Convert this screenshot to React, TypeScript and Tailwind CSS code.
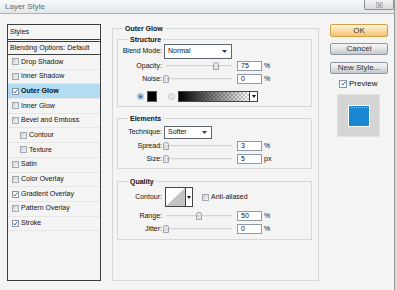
import React from 'react'

const LIST_ITEMS: { label: string; checked: boolean; sub?: boolean; active?: boolean }[] = [
  { label: 'Drop Shadow', checked: false },
  { label: 'Inner Shadow', checked: false },
  { label: 'Outer Glow', checked: true, active: true },
  { label: 'Inner Glow', checked: false },
  { label: 'Bevel and Emboss', checked: false },
  { label: 'Contour', checked: false, sub: true },
  { label: 'Texture', checked: false, sub: true },
  { label: 'Satin', checked: false },
  { label: 'Color Overlay', checked: false },
  { label: 'Gradient Overlay', checked: true },
  { label: 'Pattern Overlay', checked: false },
  { label: 'Stroke', checked: true },
]

function Check({ checked, size = 7 }: { checked: boolean; size?: number }) {
  const box = size === 8 ? 'w-[8px] h-[8px]' : 'w-[7px] h-[7px]'
  if (checked) {
    return (
      <span className={`${box} shrink-0 border border-[#8e979f] bg-white flex items-center justify-center`}>
        <svg width="5" height="5" viewBox="0 0 5 5">
          <path d="M0.6 2.6 L1.8 4 L4.4 0.6" fill="none" stroke="#1f4fa8" strokeWidth="0.9" />
        </svg>
      </span>
    )
  }
  return <span className={`${box} shrink-0 border border-[#a2a8ae] bg-gradient-to-br from-[#cdd0d3] to-[#f6f6f6]`} />
}

function Thumb() {
  return (
    <svg width="6" height="8" viewBox="0 0 6 8" className="shrink-0">
      <path d="M0.5 2 Q0.5 0.5 3 0.5 Q5.5 0.5 5.5 2 L5.5 7.5 L0.5 7.5 Z" fill="#ececec" stroke="#8b8f94" strokeWidth="0.8" />
      <path d="M2 3 L2 6 M4 3 L4 6" stroke="#b8bcc0" strokeWidth="0.6" />
    </svg>
  )
}

/** スライダー＋数値入力 */
function SliderRow({ label, value, unit, pos }: { label: string; value: string; unit: string; pos: number }) {
  return (
    <div className="flex items-center h-[12px]">
      <span className="w-[44px] text-right">{label}</span>
      <div className="ml-[4px] w-[66px] h-[8px] relative flex items-center">
        <div className="w-full h-[2px] bg-[#d2d4d6] border-b border-[#ededed]" />
        <div className="absolute top-0" style={{ left: `${pos * 66 - 3}px` }}>
          <Thumb />
        </div>
      </div>
      <div className="ml-[5px] w-[25px] h-[10px] border border-[#8f9aa5] bg-white pl-[3px] leading-[8px]">{value}</div>
      <span className="ml-[2px]">{unit}</span>
    </div>
  )
}

function DownArrow() {
  return (
    <svg width="5" height="3" viewBox="0 0 5 3">
      <path d="M0 0 L5 0 L2.5 3 Z" fill="#2d3e5c" />
    </svg>
  )
}

function Dropdown({ value, width }: { value: string; width: string }) {
  return (
    <div className={`${width} h-full border border-[#5e6670] bg-white flex items-center justify-between pl-[3px] pr-[4px]`}>
      <span>{value}</span>
      <DownArrow />
    </div>
  )
}

function Radio({ on }: { on: boolean }) {
  return (
    <svg width="7" height="7" viewBox="0 0 7 7" className="shrink-0">
      <circle cx="3.5" cy="3.5" r="3" fill={on ? '#dbe4ee' : '#e6e6e6'} stroke={on ? '#7f92aa' : '#b4b4b4'} strokeWidth="0.7" />
      {on && <circle cx="3.5" cy="3.5" r="1.7" fill="#2e6fc9" />}
    </svg>
  )
}

function Group({ title, className, children }: { title: string; className: string; children: React.ReactNode }) {
  return (
    <div className={`relative border border-[#d6d7d8] ${className}`}>
      <span className="absolute -top-[5px] left-[10px] px-[2px] bg-[#f4f4f4] font-bold leading-[9px]">{title}</span>
      {children}
    </div>
  )
}

export default function App() {
  return (
    <div className="w-[397px] h-[290px] bg-[#d9d9d9] overflow-hidden font-['Liberation_Sans',Arial,sans-serif] text-[7px] text-[#111]">
      <div className="w-[395px] h-[290px] bg-[#f4f4f4] border-r border-[#9c9c9c] flex flex-col">
        {/* タイトルバー */}
        <div className="h-[14px] shrink-0 flex items-start justify-between border-b border-[#aeb2b6] bg-gradient-to-b from-[#f6f8fa] to-[#e3e7eb]">
          <span className="pl-[5px] pt-[2px] text-[8px] leading-[10px] text-[#626c76]">Layer Style</span>
          <div className="w-[30px] h-[10px] border border-t-0 border-[#8d9197] rounded-b-[2px] bg-gradient-to-b from-[#f4f4f4] to-[#d8dadc] flex items-center justify-center">
            <svg width="7" height="6" viewBox="0 0 7 6">
              <rect x="0.5" y="0.5" width="6" height="5" fill="none" stroke="#9a9ea4" strokeWidth="0.6" />
              <path d="M1.6 1.4 L5.4 4.6 M5.4 1.4 L1.6 4.6" stroke="#6d7278" strokeWidth="0.8" />
            </svg>
          </div>
        </div>

        <div className="flex pl-[7px] pt-[10px]">
          {/* スタイル一覧 */}
          <div className="w-[94px] h-[257px] shrink-0 border border-[#3e3e3e] flex flex-col">
            <div className="h-[15px] border-b border-[#3e3e3e] pl-[2px] flex items-center">Styles</div>
            <div className="mt-[1px] h-[14px] border-y border-[#3e3e3e] pl-[2px] flex items-center">Blending Options: Default</div>
            {LIST_ITEMS.map((item) => (
              <div
                key={item.label}
                className={`h-[14.7px] shrink-0 flex items-center gap-[2px] border-b border-[#e6e6e6] ${item.sub ? 'pl-[12px]' : 'pl-[4px]'} ${item.active ? 'bg-[#b1dcf1] font-bold' : ''}`}
              >
                <Check checked={item.checked} />
                <span>{item.label}</span>
              </div>
            ))}
          </div>

          {/* 設定パネル */}
          <Group title="Outer Glow" className="ml-[11px] mt-[4px] w-[207px] h-[253px] shrink-0 pt-[10px] pl-[4px]">
            <Group title="Structure" className="w-[195px] h-[68px] pt-[4px]">
              <div className="flex items-center h-[15px]">
                <span className="w-[44px] text-right">Blend Mode:</span>
                <div className="ml-[2px] h-[15px]">
                  <Dropdown value="Normal" width="w-[68px]" />
                </div>
              </div>
              <div className="mt-[1px]">
                <SliderRow label="Opacity:" value="75" unit="%" pos={0.75} />
              </div>
              <div className="mt-[1px]">
                <SliderRow label="Noise:" value="0" unit="%" pos={0} />
              </div>
              <div className="mt-[5px] h-[12px] flex items-center">
                <div className="ml-[19px]">
                  <Radio on />
                </div>
                <div className="ml-[3px] w-[10px] h-[11px] border border-[#555] bg-black" />
                <div className="ml-[11px]">
                  <Radio on={false} />
                </div>
                <div className="ml-[3px] w-[80px] h-[11px] border border-[#444] flex">
                  <div className="flex-1 bg-[repeating-conic-gradient(#c9c9c9_0%_25%,#ffffff_0%_50%)] bg-[length:4px_4px]">
                    <div className="w-full h-full bg-gradient-to-r from-black to-transparent" />
                  </div>
                  <div className="w-[8px] border-l border-[#444] bg-white flex items-center justify-center">
                    <svg width="4" height="3" viewBox="0 0 4 3">
                      <path d="M0 0 L4 0 L2 3 Z" fill="#111" />
                    </svg>
                  </div>
                </div>
              </div>
            </Group>

            <Group title="Elements" className="mt-[11px] w-[195px] h-[51px] pt-[7px]">
              <div className="flex items-center h-[13px]">
                <span className="w-[44px] text-right">Technique:</span>
                <div className="ml-[2px] h-[13px]">
                  <Dropdown value="Softer" width="w-[48px]" />
                </div>
              </div>
              <div className="mt-[1px]">
                <SliderRow label="Spread:" value="3" unit="%" pos={0} />
              </div>
              <div className="mt-[1px]">
                <SliderRow label="Size:" value="5" unit="px" pos={0} />
              </div>
            </Group>

            <Group title="Quality" className="mt-[12px] w-[195px] h-[59px] pt-[5px]">
              <div className="flex items-center h-[20px]">
                <span className="w-[44px] text-right">Contour:</span>
                <div className="ml-[3px] w-[28px] h-[20px] border border-[#444] bg-white flex">
                  <svg width="19" height="18" viewBox="0 0 19 18" className="shrink-0">
                    <path d="M0 18 L19 0 L19 18 Z" fill="#c4c4c4" />
                  </svg>
                  <div className="flex-1 border-l border-[#444] flex items-center justify-center">
                    <svg width="4" height="3" viewBox="0 0 4 3">
                      <path d="M0 0 L4 0 L2 3 Z" fill="#111" />
                    </svg>
                  </div>
                </div>
                <div className="ml-[9px] flex items-center gap-[2px]">
                  <Check checked={false} />
                  <span>Anti-aliased</span>
                </div>
              </div>
              <div className="mt-[3px]">
                <SliderRow label="Range:" value="50" unit="%" pos={0.5} />
              </div>
              <div className="mt-[1px]">
                <SliderRow label="Jitter:" value="0" unit="%" pos={0} />
              </div>
            </Group>
          </Group>

          {/* ボタン列 */}
          <div className="ml-[11px] w-[58px] shrink-0 flex flex-col text-[8px] text-[#333]">
            <div className="h-[13px] border border-[#d39f45] rounded-[2px] bg-gradient-to-b from-[#fff3d6] to-[#f4c470] flex items-center justify-center">OK</div>
            <div className="mt-[6px] h-[12px] border border-[#8e97a3] rounded-[2px] bg-gradient-to-b from-[#f5f6f7] via-[#e1e4e7] to-[#c3c8cd] flex items-center justify-center">Cancel</div>
            <div className="mt-[7px] h-[12px] border border-[#8e97a3] rounded-[2px] bg-gradient-to-b from-[#f5f6f7] via-[#e1e4e7] to-[#c3c8cd] flex items-center justify-center">New Style...</div>
            <div className="mt-[5px] h-[9px] pl-[9px] flex items-center gap-[2px] text-[#111]">
              <Check checked size={8} />
              <span>Preview</span>
            </div>
            <div className="mt-[6px] ml-[7px] w-[43px] h-[43px] bg-[#d5d5d5] border border-[#e2e2e2] flex items-center justify-center">
              <div className="w-[22px] h-[22px] bg-[#1b87d1] border border-white pt-[1px] px-[2px]">
                <div className="border-t border-dotted border-[#7fbde9]" />
              </div>
            </div>
          </div>
        </div>
      </div>
    </div>
  )
}
